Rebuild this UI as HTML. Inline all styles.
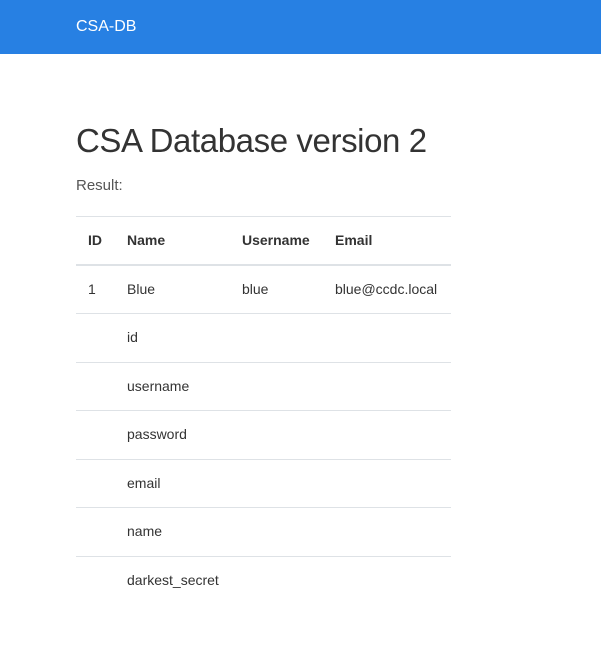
<!DOCTYPE html>
<html><head><style>
body{margin:0;background:#fff;font-family:"Liberation Sans",sans-serif;color:#333;width:601px;height:656px;overflow:hidden;position:relative}
.nav{height:54px;background:#2780e3;color:#fff;font-size:16px;line-height:54px;padding-left:76px}
h1{position:absolute;left:76px;top:121px;margin:0;font-weight:normal;font-size:33px;line-height:40px;letter-spacing:-0.4px;color:#333}
.res{position:absolute;left:76px;top:177px;font-size:15px;color:#555}
.t{position:absolute;left:76px;top:216px;width:375px;border-top:1px solid #dee2e6}
.r{height:47.5px;border-bottom:1px solid #dee2e6;position:relative;font-size:14px;line-height:47.5px}
.r.h{font-weight:bold;border-bottom:2px solid #dee2e6;height:46.5px}
.r span{position:absolute;top:0}
.r.last{border-bottom:none}
</style></head><body>
<div class="nav">CSA-DB</div>
<h1>CSA Database version 2</h1>
<div class="res">Result:</div>
<div class="t">
<div class="r h"><span style="left:12px">ID</span><span style="left:51px">Name</span><span style="left:166px">Username</span><span style="left:259px">Email</span></div>
<div class="r"><span style="left:12px">1</span><span style="left:51px">Blue</span><span style="left:166px">blue</span><span style="left:259px">blue@ccdc.local</span></div>
<div class="r"><span style="left:51px">id</span></div>
<div class="r"><span style="left:51px">username</span></div>
<div class="r"><span style="left:51px">password</span></div>
<div class="r"><span style="left:51px">email</span></div>
<div class="r"><span style="left:51px">name</span></div>
<div class="r last"><span style="left:51px">darkest_secret</span></div>
</div>
</body></html>
